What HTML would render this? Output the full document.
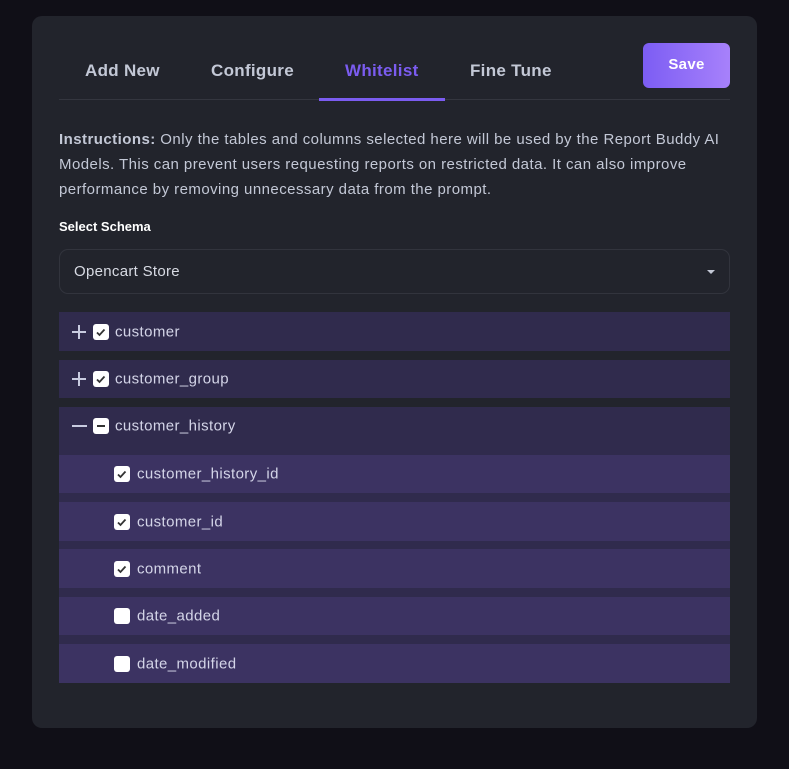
<!DOCTYPE html>
<html><head><style>
*{box-sizing:border-box;margin:0;padding:0}
body{width:789px;height:769px;background:#100f17;font-family:"Liberation Sans",sans-serif;position:relative;overflow:hidden}
.card{position:absolute;left:32px;top:16px;width:725px;height:712px;background:#22242c;border-radius:10px}
.tab{position:absolute;top:61px;font-size:17px;font-weight:bold;color:#c3c8d6;letter-spacing:0.3px}
.line{position:absolute;left:59px;top:99px;width:671px;height:1px;background:#34363f}
.uline{position:absolute;left:319px;top:98px;width:126px;height:3px;background:#7b5cf0}
.save{position:absolute;left:643px;top:43px;width:87px;height:45px;border-radius:6px;background:linear-gradient(90deg,#7c5df3,#a781fb);color:#fff;font-weight:bold;font-size:15px;text-align:center;line-height:44px;letter-spacing:0.3px}
.ins{position:absolute;left:59px;top:127px;width:676px;font-size:15px;line-height:25px;color:#c3c8d6;letter-spacing:0.45px}
.lbl{position:absolute;left:59px;top:219px;font-size:13px;font-weight:bold;color:#fff}
.sel{position:absolute;left:59px;top:249px;width:671px;height:45px;border:1px solid #32343d;border-radius:9px;color:#d8dbe4;font-size:15px;padding-left:14px;line-height:43px;letter-spacing:0.3px}
.sel:after{content:"";position:absolute;right:14px;top:20px;border:4px solid transparent;border-top:4px solid #c3c8d6}
.row{position:absolute;left:59px;width:671px;background:#302b4d;color:#d4d5e8;font-size:15px;letter-spacing:0.4px}
.sub{background:#3c3362}
.t{position:absolute;top:50%;transform:translateY(-50%)}
.cb{position:absolute;width:16px;height:16px;background:#fff;border-radius:3px;top:50%;transform:translateY(-50%)}
.cb svg{position:absolute;left:0;top:0}
.pm{position:absolute;top:50%;transform:translateY(-50%);left:12px}
</style></head><body>
<div class="card"></div>
<div class="tab" style="left:85px">Add New</div>
<div class="tab" style="left:211px">Configure</div>
<div class="tab" style="left:345px;color:#7b5cf0">Whitelist</div>
<div class="tab" style="left:470px">Fine Tune</div>
<div class="line"></div><div class="uline"></div>
<div class="save">Save</div>
<div class="ins"><b>Instructions:</b> Only the tables and columns selected here will be used by the Report Buddy AI Models. This can prevent users requesting reports on restricted data. It can also improve performance by removing unnecessary data from the prompt.</div>
<div class="lbl">Select Schema</div>
<div class="sel">Opencart Store</div>

<div class="row" style="top:312px;height:39px"><svg class="pm" width="16" height="16"><path d="M8 1v14M1 8h14" stroke="#c8cbe0" stroke-width="2"/></svg><div class="cb" style="left:34px"><svg width="16" height="16"><path d="M4 8.5l2.5 2.5 5-5.5" stroke="#333" stroke-width="1.8" fill="none"/></svg></div><span class="t" style="left:56px">customer</span></div>
<div class="row" style="top:360px;height:38px"><svg class="pm" width="16" height="16"><path d="M8 1v14M1 8h14" stroke="#c8cbe0" stroke-width="2"/></svg><div class="cb" style="left:34px"><svg width="16" height="16"><path d="M4 8.5l2.5 2.5 5-5.5" stroke="#333" stroke-width="1.8" fill="none"/></svg></div><span class="t" style="left:56px">customer_group</span></div>
<div class="row" style="top:407px;height:276px"></div>
<div class="row" style="top:407px;height:38px;background:none"><svg class="pm" width="16" height="16"><path d="M1 8h15" stroke="#c8cbe0" stroke-width="2"/></svg><div class="cb" style="left:34px"><svg width="16" height="16"><path d="M4 8h8" stroke="#333" stroke-width="2"/></svg></div><span class="t" style="left:56px">customer_history</span></div>
<div class="row sub" style="top:455px;height:38px"><div class="cb" style="left:55px"><svg width="16" height="16"><path d="M4 8.5l2.5 2.5 5-5.5" stroke="#333" stroke-width="1.8" fill="none"/></svg></div><span class="t" style="left:78px">customer_history_id</span></div>
<div class="row sub" style="top:502px;height:39px"><div class="cb" style="left:55px"><svg width="16" height="16"><path d="M4 8.5l2.5 2.5 5-5.5" stroke="#333" stroke-width="1.8" fill="none"/></svg></div><span class="t" style="left:78px">customer_id</span></div>
<div class="row sub" style="top:549px;height:39px"><div class="cb" style="left:55px"><svg width="16" height="16"><path d="M4 8.5l2.5 2.5 5-5.5" stroke="#333" stroke-width="1.8" fill="none"/></svg></div><span class="t" style="left:78px">comment</span></div>
<div class="row sub" style="top:597px;height:38px"><div class="cb" style="left:55px"></div><span class="t" style="left:78px">date_added</span></div>
<div class="row sub" style="top:644px;height:39px"><div class="cb" style="left:55px"></div><span class="t" style="left:78px">date_modified</span></div>
</body></html>
